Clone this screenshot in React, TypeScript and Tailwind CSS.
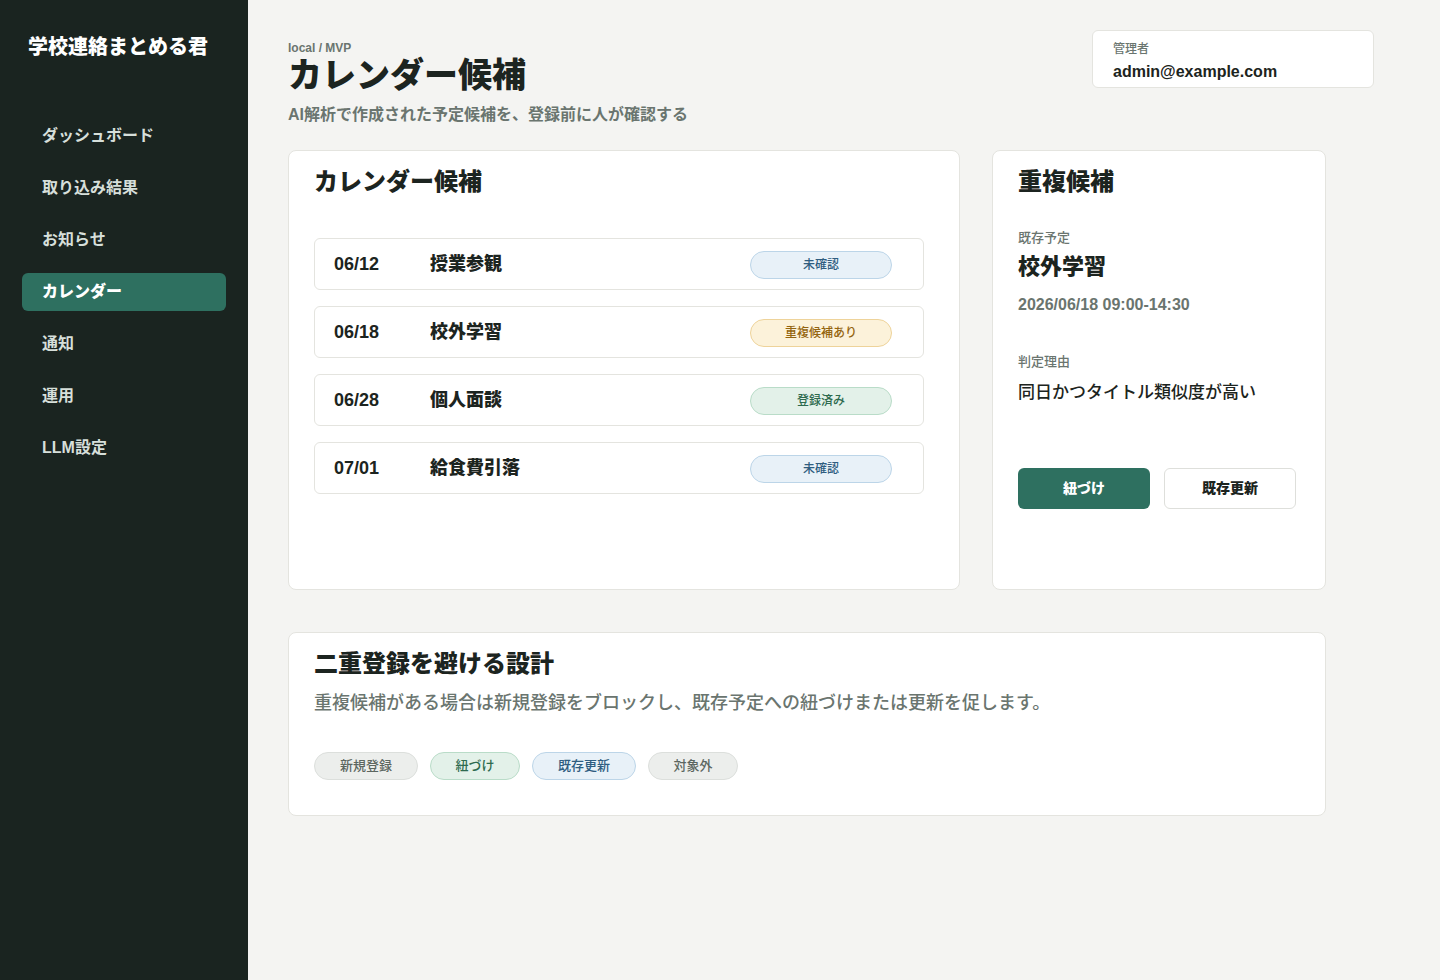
const font = "font-['Liberation_Sans','Noto_Sans_CJK_JP',sans-serif]";

const navItems = ["ダッシュボード", "取り込み結果", "お知らせ", "カレンダー", "通知", "運用", "LLM設定"];

type Status = "pending" | "dup" | "done";

const rows: { date: string; title: string; status: Status }[] = [
  { date: "06/12", title: "授業参観", status: "pending" },
  { date: "06/18", title: "校外学習", status: "dup" },
  { date: "06/28", title: "個人面談", status: "done" },
  { date: "07/01", title: "給食費引落", status: "pending" },
];

const badgeStyles: Record<Status, { label: string; cls: string }> = {
  pending: { label: "未確認", cls: "bg-[#e8f1f8] border-[#bcd5e8] text-[#2f5d80]" },
  dup: { label: "重複候補あり", cls: "bg-[#fcf2da] border-[#eed39a] text-[#94650f]" },
  done: { label: "登録済み", cls: "bg-[#e3f1e9] border-[#b9dcc8] text-[#2d6a4e]" },
};

const tags = [
  { label: "新規登録", cls: "w-[104px] bg-[#eceeec] border-[#dcdfdc] text-[#5c6660]" },
  { label: "紐づけ", cls: "w-[90px] bg-[#e3f1e9] border-[#b9dcc8] text-[#2d6a4e]" },
  { label: "既存更新", cls: "w-[104px] bg-[#e8f1f8] border-[#bcd5e8] text-[#2f5d80]" },
  { label: "対象外", cls: "w-[90px] bg-[#eceeec] border-[#dcdfdc] text-[#5c6660]" },
];

function Sidebar() {
  return (
    <aside className="w-[248px] shrink-0 bg-[#1a2420] px-[22px] pt-[33px] min-h-[980px]">
      <div className="pl-[6px] text-[20px] leading-7 font-black text-white">学校連絡まとめる君</div>
      <nav className="mt-[56px] flex flex-col gap-[14px]">
        {navItems.map((item) =>
          item === "カレンダー" ? (
            <div key={item} className="h-[38px] rounded-md bg-[#2e7060] pl-5 flex items-center text-[16px] font-black text-white">
              {item}
            </div>
          ) : (
            <div key={item} className="h-[38px] pl-5 flex items-center text-[16px] font-semibold text-[#d6dfda]">
              {item}
            </div>
          )
        )}
      </nav>
    </aside>
  );
}

function CandidateCard() {
  return (
    <section className="bg-white border border-[#e4e4df] rounded-lg pl-[25px] pr-[35px] pt-[15px] h-[440px]">
      <h2 className="text-[24px] leading-8 font-black text-[#1c2420]">カレンダー候補</h2>
      <div className="mt-[40px] flex flex-col gap-4">
        {rows.map((r) => {
          const b = badgeStyles[r.status];
          return (
            <div key={r.date} className="h-[52px] border border-[#e4e4df] rounded-md flex items-center pl-[19px] pr-[31px] pt-px">
              <span className="w-[96px] text-[18px] font-semibold text-[#1c2420]">{r.date}</span>
              <span className="flex-1 text-[18px] font-black text-[#1c2420]">{r.title}</span>
              <span className={`w-[142px] h-[28px] rounded-full border flex items-center justify-center text-[12px] font-medium ${b.cls}`}>
                {b.label}
              </span>
            </div>
          );
        })}
      </div>
    </section>
  );
}

function DuplicateCard() {
  return (
    <section className="bg-white border border-[#e4e4df] rounded-lg px-[25px] pt-[15px] h-[440px]">
      <h2 className="text-[24px] leading-8 font-black text-[#1c2420]">重複候補</h2>
      <div className="mt-[30px] text-[13px] leading-5 font-medium text-[#6a756f]">既存予定</div>
      <div className="mt-1 text-[22px] leading-[30px] font-black text-[#1c2420]">校外学習</div>
      <div className="mt-[11px] text-[16px] leading-6 font-semibold text-[#6a756f]">2026/06/18 09:00-14:30</div>
      <div className="mt-[35px] text-[13px] leading-5 font-medium text-[#6a756f]">判定理由</div>
      <div className="mt-[8px] text-[17px] leading-[26px] font-medium text-[#1c2420]">同日かつタイトル類似度が高い</div>
      <div className="mt-[62px] flex gap-[14px]">
        <button className="w-[132px] h-[41px] rounded-md bg-[#2e7060] text-white text-[14px] font-black">紐づけ</button>
        <button className="w-[132px] h-[41px] rounded-md bg-white border border-[#dedfdb] text-[#1c2420] text-[14px] font-black">既存更新</button>
      </div>
    </section>
  );
}

function DesignCard() {
  return (
    <section className="bg-white border border-[#e4e4df] rounded-lg px-[25px] pt-[15px] pb-[35px]">
      <h2 className="text-[24px] leading-8 font-black text-[#1c2420]">二重登録を避ける設計</h2>
      <p className="mt-[9px] text-[18px] leading-7 font-medium text-[#6a756f]">
        重複候補がある場合は新規登録をブロックし、既存予定への紐づけまたは更新を促します。
      </p>
      <div className="mt-[35px] flex gap-3">
        {tags.map((t) => (
          <span key={t.label} className={`h-[28px] rounded-full border flex items-center justify-center text-[13px] font-medium ${t.cls}`}>
            {t.label}
          </span>
        ))}
      </div>
    </section>
  );
}

export default function App() {
  return (
    <div className={`${font} flex min-h-[980px] bg-[#f4f4f2]`}>
      <Sidebar />
      <main className="flex-1 pl-10 pt-[30px]">
        <header className="w-[1086px] flex justify-between items-start">
          <div className="pt-[10px]">
            <div className="text-[12px] leading-4 font-bold text-[#6a756f]">local / MVP</div>
            <h1 className="mt-px text-[34px] leading-[37px] font-black text-[#1c2420]">カレンダー候補</h1>
            <p className="mt-[9px] text-[16px] leading-6 font-semibold text-[#6a756f]">
              AI解析で作成された予定候補を、登録前に人が確認する
            </p>
          </div>
          <div className="w-[282px] h-[58px] bg-white border border-[#e4e4df] rounded-md pl-[20px] pt-[10px]">
            <div className="text-[12px] leading-4 font-medium text-[#6a756f]">管理者</div>
            <div className="mt-[3px] text-[16px] leading-6 font-semibold text-[#1c2420]">admin@example.com</div>
          </div>
        </header>
        <div className="w-[1038px] mt-[23px] grid grid-cols-[672px_334px] gap-8">
          <CandidateCard />
          <DuplicateCard />
        </div>
        <div className="w-[1038px] mt-[42px]">
          <DesignCard />
        </div>
      </main>
    </div>
  );
}
